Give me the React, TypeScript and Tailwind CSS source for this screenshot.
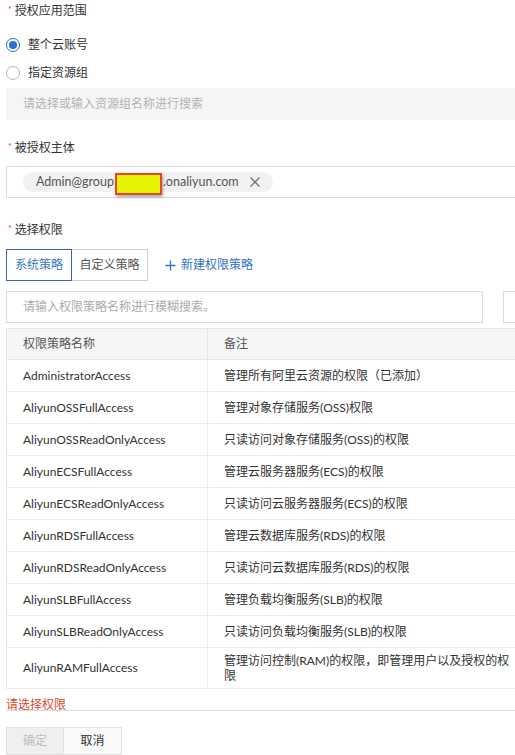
import React from "react";

const rows: [string, string][] = [
  ["AdministratorAccess", "管理所有阿里云资源的权限（已添加）"],
  ["AliyunOSSFullAccess", "管理对象存储服务(OSS)权限"],
  ["AliyunOSSReadOnlyAccess", "只读访问对象存储服务(OSS)的权限"],
  ["AliyunECSFullAccess", "管理云服务器服务(ECS)的权限"],
  ["AliyunECSReadOnlyAccess", "只读访问云服务器服务(ECS)的权限"],
  ["AliyunRDSFullAccess", "管理云数据库服务(RDS)的权限"],
  ["AliyunRDSReadOnlyAccess", "只读访问云数据库服务(RDS)的权限"],
  ["AliyunSLBFullAccess", "管理负载均衡服务(SLB)的权限"],
  ["AliyunSLBReadOnlyAccess", "只读访问负载均衡服务(SLB)的权限"],
];

const Label = ({ text }: { text: string }) => (
  <div className="h-5 flex items-center leading-5 text-[12px] text-[#333]">
    <span className="text-[#e0482f] text-[9px] mr-[3px] ml-[2px] -mt-[3px]">*</span>
    {text}
  </div>
);

export default function App() {
  return (
    <div className="w-[515px] h-[755px] overflow-hidden bg-white font-['Lato','Noto_Sans_CJK_SC',sans-serif] text-[12px] text-[#333]">
      <div className="w-[600px] pl-[6px] pt-[1px]">
        {/* 授权应用范围 */}
        <Label text="授权应用范围" />
        <div className="mt-[14px] h-5 flex items-center gap-2">
          <span className="w-[14px] h-[14px] rounded-full border border-[#2f6fce] flex items-center justify-center">
            <span className="w-2 h-2 rounded-full bg-[#2f6fce]" />
          </span>
          <span>整个云账号</span>
        </div>
        <div className="mt-2 h-5 flex items-center gap-2">
          <span className="w-[14px] h-[14px] rounded-full border border-[#b5b5b5] bg-white" />
          <span>指定资源组</span>
        </div>
        <div className="mt-[5px] h-8 bg-[#f5f5f5] flex items-center pl-[17px] text-[#b3b3b3]">
          请选择或输入资源组名称进行搜索
        </div>

        {/* 被授权主体 */}
        <div className="mt-[18px]">
          <Label text="被授权主体" />
        </div>
        <div className="mt-2 h-8 border border-[#dcdcdc] flex items-center pl-4">
          <div className="h-5 w-[250px] rounded-full bg-[#f1f1f1] flex items-center pl-[13px] text-[#555] text-[12.5px]">
            <span>Admin@group</span>
            <span className="inline-block w-[47px] h-[22px] mt-[4px] ml-[1px] border-2 border-[#e8432f] bg-[#e4f404] shadow-[1px_2px_3px_rgba(0,0,0,0.35)]" />
            <span className="ml-[1px]">.onaliyun.com</span>
            <svg className="ml-[10px]" width="12" height="12" viewBox="0 0 12 12">
              <path d="M1.5 1.5 L10.5 10.5 M10.5 1.5 L1.5 10.5" stroke="#777" strokeWidth="1.4" />
            </svg>
          </div>
        </div>

        {/* 选择权限 */}
        <div className="mt-[22px]">
          <Label text="选择权限" />
        </div>
        <div className="mt-[9px] flex items-center">
          <div className="h-8 w-[66px] border border-[#3767a9] flex items-center justify-center text-[#3b75c0]">
            系统策略
          </div>
          <div className="h-8 w-[76px] border border-l-0 border-[#cfcfcf] flex items-center justify-center text-[#555]">
            自定义策略
          </div>
          <div className="ml-[17px] flex items-center gap-[5px] text-[#2f74c4] text-[12px]">
            <svg width="11" height="11" viewBox="0 0 11 11">
              <path d="M5.5 0.5 V10.5 M0.5 5.5 H10.5" stroke="#2f74c4" strokeWidth="1.3" />
            </svg>
            新建权限策略
          </div>
        </div>
        <div className="mt-[10px] flex gap-5">
          <div className="h-8 w-[477px] border border-[#dcdcdc] flex items-center pl-4 text-[#ababab]">
            请输入权限策略名称进行模糊搜索。
          </div>
          <div className="h-8 w-[60px] border border-[#dcdcdc]" />
        </div>

        {/* table */}
        <div className="mt-[5px] border-l border-[#e6e6e6]">
          <div className="flex h-8 bg-[#f6f6f6] border-y border-[#e6e6e6] text-[#555]">
            <div className="w-[201px] border-r border-[#e6e6e6] flex items-center pl-4">权限策略名称</div>
            <div className="flex-1 flex items-center pl-4">备注</div>
          </div>
          {rows.map(([name, note]) => (
            <div key={name} className="flex h-8 border-b border-[#ececec]">
              <div className="w-[201px] border-r border-[#ececec] flex items-center pl-4">{name}</div>
              <div className="flex-1 flex items-center pl-4">{note}</div>
            </div>
          ))}
          <div className="flex h-[41px] border-b border-[#ececec]">
            <div className="w-[201px] border-r border-[#ececec] flex items-center pl-4">AliyunRAMFullAccess</div>
            <div className="w-[308px] flex items-center pl-4 pr-1 leading-[15px]">
              管理访问控制(RAM)的权限，即管理用户以及授权的权限
            </div>
          </div>
        </div>

        <div className="h-[21px] pt-[10px] leading-[12px] text-[#e0482f]">请选择权限</div>
        <div className="border-t border-[#dcdcdc] pt-4 flex">
          <div className="h-[28px] w-[58px] bg-[#efefef] border border-[#e2e2e2] flex items-center justify-center text-[#bdbdbd]">
            确定
          </div>
          <div className="h-[28px] w-[58px] bg-[#fafafa] border border-l-0 border-[#e2e2e2] flex items-center justify-center text-[#333]">
            取消
          </div>
        </div>
      </div>
    </div>
  );
}
